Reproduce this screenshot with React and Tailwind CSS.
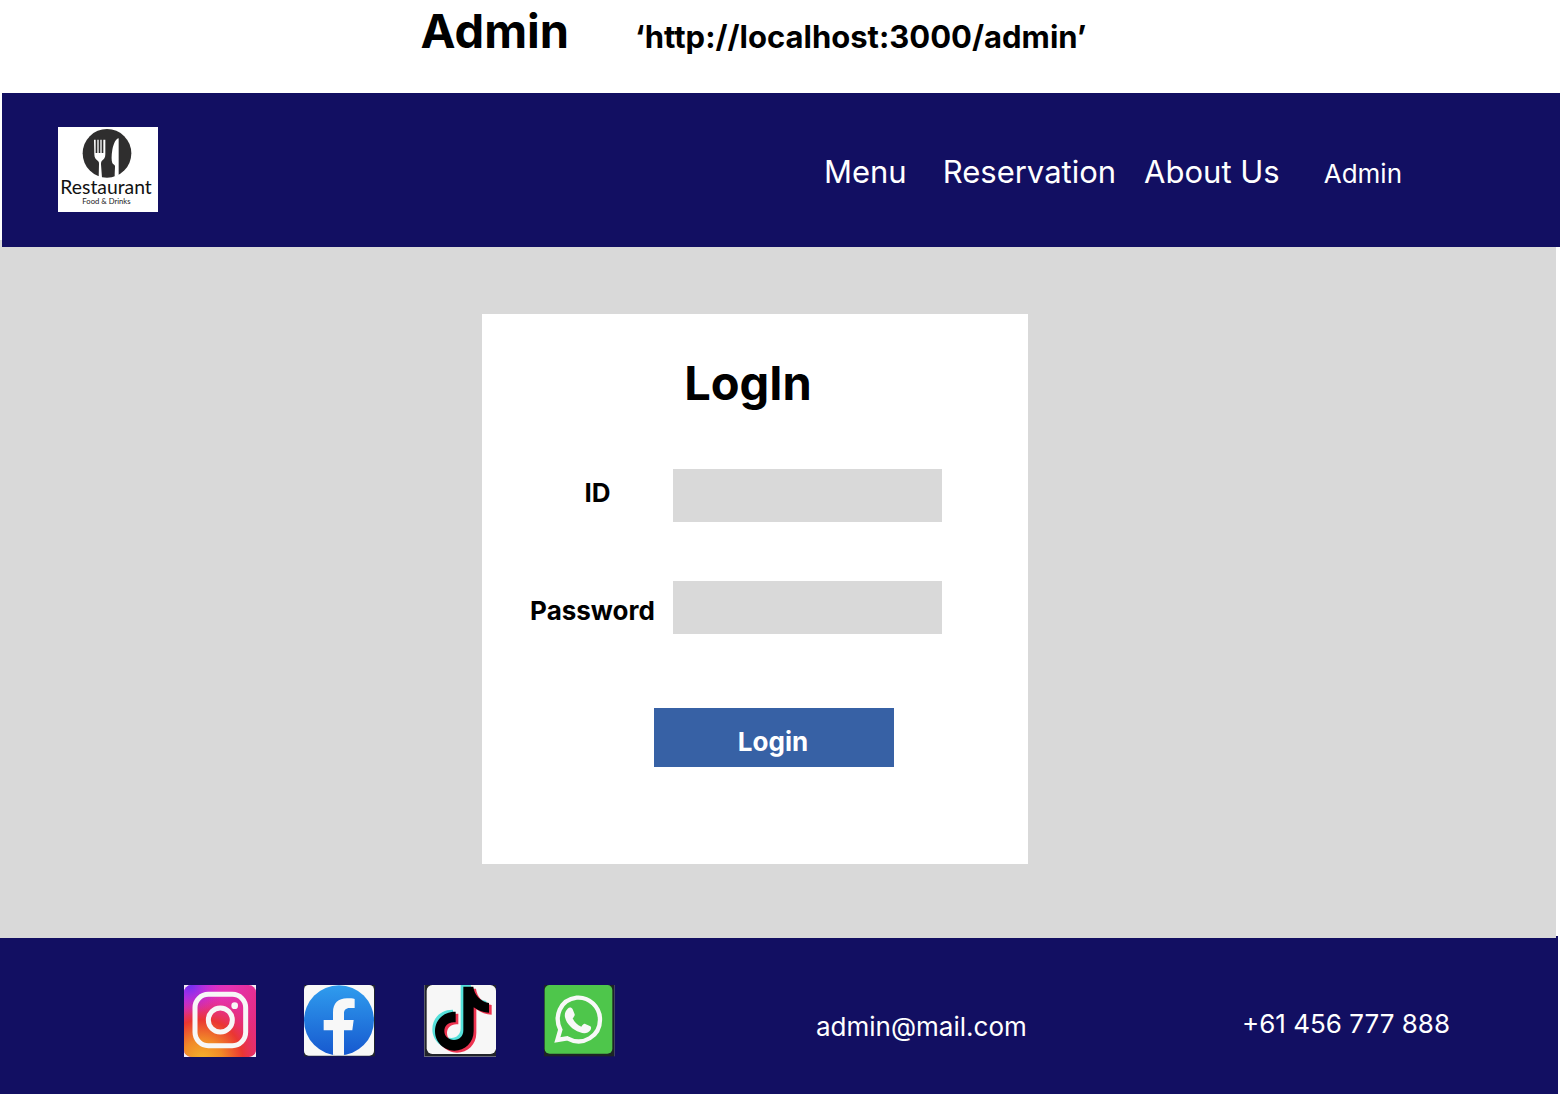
import React from "react";

function RestaurantLogo() {
  return (
    <svg viewBox="0 0 300 255" className="h-[85px] w-[100px] shrink-0" role="img" aria-label="Restaurant Food & Drinks">
      <rect width="300" height="255" fill="#ffffff" />
      <circle cx="147" cy="79" r="73" fill="#2f2e2e" />
      <path
        d="M108 38h5v40h5V38h4v40h5V38h4v40h5V38h6v44c0 10-4 15-10 19 -3 3-3 7-3 11l3 41h-10l1-41c0-5 0-8-4-11 -6-4-10-9-10-19z"
        fill="#ffffff"
      />
      <path d="M182 34c-8 0-15 15-19 34 -3 18-3 32 0 40 2 5 8 4 8 10 0 8-1 18-1 32l12-5z" fill="#ffffff" />
      <text x="7" y="200" fontFamily="Lato, 'Open Sans', sans-serif" fontSize="58" fill="#111111">
        Restaurant
      </text>
      <text x="73" y="232" fontFamily="Lato, 'Open Sans', sans-serif" fontSize="23" fill="#222222">
        Food &amp; Drinks
      </text>
    </svg>
  );
}

function InstagramIcon() {
  return (
    <svg viewBox="0 0 216 216" className="size-[72px]" aria-hidden="true">
      <defs>
        <linearGradient id="ig-base" x1="0" y1="0" x2="1" y2="0.5">
          <stop offset="0" stopColor="#c92be0" />
          <stop offset="0.5" stopColor="#e532b4" />
          <stop offset="1" stopColor="#e42c80" />
        </linearGradient>
        <radialGradient id="ig-warm" cx="0.25" cy="1.05" r="0.95">
          <stop offset="0" stopColor="#f5b52c" />
          <stop offset="0.3" stopColor="#f18a28" />
          <stop offset="0.6" stopColor="#ea3632" />
          <stop offset="1" stopColor="#e42c80" stopOpacity="0" />
        </radialGradient>
        <radialGradient id="ig-violet" cx="0.08" cy="0" r="0.42">
          <stop offset="0" stopColor="#6a30f5" />
          <stop offset="1" stopColor="#c92be0" stopOpacity="0" />
        </radialGradient>
      </defs>
      <rect width="216" height="216" fill="#f3eef4" />
      <rect width="216" height="216" rx="22" fill="url(#ig-base)" />
      <rect width="216" height="216" rx="22" fill="url(#ig-warm)" />
      <rect width="216" height="216" rx="22" fill="url(#ig-violet)" />
      <rect x="33" y="28" width="152" height="154" rx="40" fill="none" stroke="#f7f7f7" strokeWidth="15" />
      <circle cx="109" cy="105" r="36" fill="none" stroke="#f7f7f7" strokeWidth="15" />
      <circle cx="152" cy="62" r="10" fill="#f7f7f7" />
    </svg>
  );
}

function FacebookIcon() {
  return (
    <svg viewBox="0 0 216 216" className="size-[72px]" aria-hidden="true">
      <defs>
        <linearGradient id="fb-blue" x1="0" y1="0" x2="0" y2="1">
          <stop offset="0" stopColor="#2f9cee" />
          <stop offset="1" stopColor="#1759cf" />
        </linearGradient>
        <clipPath id="fb-clip">
          <circle cx="105" cy="106" r="105" />
        </clipPath>
      </defs>
      <rect width="213" height="214" fill="#20242e" />
      <rect width="210" height="212" rx="14" fill="#f8f8f8" />
      <circle cx="105" cy="106" r="105" fill="url(#fb-blue)" />
      <path
        clipPath="url(#fb-clip)"
        d="M87 216v-80H59v-31h28V82c0-28 16-42 42-42 9 0 17 0 23 2v27h-15c-12 0-17 7-17 16v20h29l-4 31h-25v80z"
        fill="#f8f8f8"
      />
    </svg>
  );
}

function TikTokIcon() {
  const note =
    "M118 5h30c3 24 20 44 47 49v29c-16 0-32-6-46-16v71c0 35-26 59-58 59 -32 0-58-26-58-58 0-35 27-60 62-59v32c-20-3-34 9-34 26 0 16 13 27 29 27 16 0 28-11 28-29z";
  return (
    <svg viewBox="0 0 216 216" className="size-[72px]" aria-hidden="true">
      <defs>
        <clipPath id="tt-clip">
          <rect x="8" width="208" height="207" rx="17" />
        </clipPath>
      </defs>
      <rect width="216" height="216" fill="#22242a" />
      <rect width="2" height="216" fill="#77798a" />
      <rect y="213" width="216" height="3" fill="#66687a" />
      <rect x="8" width="208" height="207" rx="17" fill="#f7f7f7" />
      <g clipPath="url(#tt-clip)">
        <path d={note} fill="#55e0da" transform="translate(-8 -6)" />
        <path d={note} fill="#ed3350" transform="translate(8 6)" />
        <path d={note} fill="#000000" />
      </g>
    </svg>
  );
}

function WhatsAppIcon() {
  return (
    <svg viewBox="0 0 216 216" className="size-[72px]" aria-hidden="true">
      <rect width="211" height="214" fill="#1c2426" />
      <rect x="210" width="2" height="214" fill="#55586e" />
      <rect x="2" width="203" height="206" rx="15" fill="#4ec64b" />
      <path
        d="M40 165l9-31c-19-38-2-90 49-96 38-3 70 28 70 66 0 48-50 82-98 56z"
        fill="none"
        stroke="#f8f8f8"
        strokeWidth="13"
        strokeLinejoin="miter"
      />
      <path
        d="M71 71c5-5 12-4 15 2l6 15c1 4-2 8-6 12 5 12 14 20 26 25 4-5 7-10 12-8l15 7c4 3 2 8 0 12 -7 9-18 11-31 6 -23-8-40-24-45-45 -2-10 1-19 8-26z"
        fill="#f8f8f8"
      />
    </svg>
  );
}

const socials = [
  { name: "Instagram", Icon: InstagramIcon },
  { name: "Facebook", Icon: FacebookIcon },
  { name: "TikTok", Icon: TikTokIcon },
  { name: "WhatsApp", Icon: WhatsAppIcon },
];

export default function App() {
  return (
    <div className="bg-white font-['Inter',sans-serif] text-black">
      <div className="flex h-[93px] items-baseline justify-center gap-[66px] pr-[53px] font-bold">
        <h1 className="text-[47px] leading-[62px]">Admin</h1>
        <p className="text-[31px] leading-[40px]">‘http://localhost:3000/admin’</p>
      </div>

      <header className="relative z-10 ml-[2px] flex h-[154px] items-center justify-between bg-[#120f62] pr-[158px] pb-[2px] pl-[56px] text-white">
        <a href="#home">
          <RestaurantLogo />
        </a>
        <nav className="flex items-baseline pt-[7px] text-[31px] leading-[40px]">
          <a href="#menu" className="mr-9">Menu</a>
          <a href="#reservation" className="mr-7">Reservation</a>
          <a href="#about" className="mr-11">About Us</a>
          <a href="#admin" className="text-[26px]">Admin</a>
        </nav>
      </header>

      <main className="relative -mt-[7px] mr-[4px] flex justify-center bg-[#d9d9d9] pt-[74px] pr-[46px] pb-[74px]">
        <form className="flex w-[546px] flex-col bg-white pt-[40px] pb-[97px]" onSubmit={(e) => e.preventDefault()}>
          <h2 className="pr-[14px] text-center text-[47px] leading-[58px] font-bold">LogIn</h2>
          <div className="mt-[57px] grid grid-cols-[125px_269px] gap-x-[18px] gap-y-[59px] pl-[48px] text-[26px] leading-[32px] font-bold">
            <label htmlFor="login-id" className="pt-[8px] pl-[10px] text-center">ID</label>
            <input id="login-id" type="text" className="h-[53px] w-full bg-[#d9d9d9] px-3 font-normal" />
            <label htmlFor="login-password" className="pt-[14px] text-center">Password</label>
            <input id="login-password" type="password" className="h-[53px] w-full bg-[#d9d9d9] px-3 font-normal" />
          </div>
          <button
            type="submit"
            className="mt-[74px] ml-[172px] w-[240px] bg-[#3761a5] pt-[18px] pr-[2px] pb-[9px] text-[26px] leading-[32px] font-bold text-white"
          >
            Login
          </button>
        </form>
      </main>

      <footer className="-mt-[2px] mr-[2px] flex h-[158px] items-center bg-[#120f62] pt-[12px] pr-[108px] pl-[184px] text-[26px] leading-[32px] text-white">
        <div className="flex gap-12">
          {socials.map(({ name, Icon }) => (
            <a key={name} href={"#" + name.toLowerCase()} aria-label={name}>
              <Icon />
            </a>
          ))}
        </div>
        <a href="mailto:admin@mail.com" className="ml-[200px] pt-[12px]">admin@mail.com</a>
        <a href="tel:+61456777888" className="ml-auto pt-[6px]">+61 456 777 888</a>
      </footer>
    </div>
  );
}
